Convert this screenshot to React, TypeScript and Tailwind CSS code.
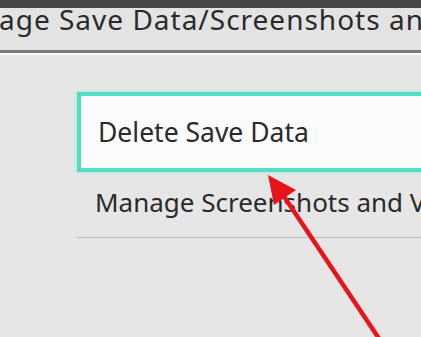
export default function App() {
  return (
    <div
      className="relative w-[421px] h-[337px] overflow-hidden bg-[#e6e6e6] text-[#2a2a2a]"
      style={{ fontFamily: '"Noto Sans", "Open Sans", sans-serif' }}
    >
      {/* Top bar */}
      <div className="h-[8px] bg-[#464646]" />
      {/* Header */}
      <div className="h-[42px] overflow-hidden whitespace-nowrap bg-[#e3e3e3]">
        <h1 className="text-[28px] leading-none -ml-[1px] -mt-[3px] tracking-[1px]">
          age Save Data/Screenshots and Videos
        </h1>
      </div>
      <div className="h-[3px] bg-[#7a7a7a]" />
      <div className="h-[2px] bg-[#fafafa]" />

      {/* List */}
      <div className="pl-[77px] pt-[37px]">
        <div className="h-[80px] -mr-[10px] flex items-center pl-[17px] bg-[#fbfbfb] border-[4px] border-[#52dcc2] shadow-[0_0_3px_#8ee8d6]">
          <span className="text-[26.5px] mt-[2px]">Delete Save Data</span>
        </div>
        <div className="h-[66px] flex items-center pl-[18px] border-b border-[#bdbdbd] whitespace-nowrap overflow-hidden">
          <span className="text-[26px] -mt-[4px]">Manage Screenshots and Videos</span>
        </div>
      </div>

      {/* Red arrow annotation */}
      <svg className="absolute inset-0" width="421" height="337" viewBox="0 0 421 337">
        <line x1="281" y1="192" x2="380" y2="340" stroke="#e8141c" strokeWidth="4.5" />
        <polygon points="268,175 296,190 274,205" fill="#e8141c" />
      </svg>
    </div>
  );
}
